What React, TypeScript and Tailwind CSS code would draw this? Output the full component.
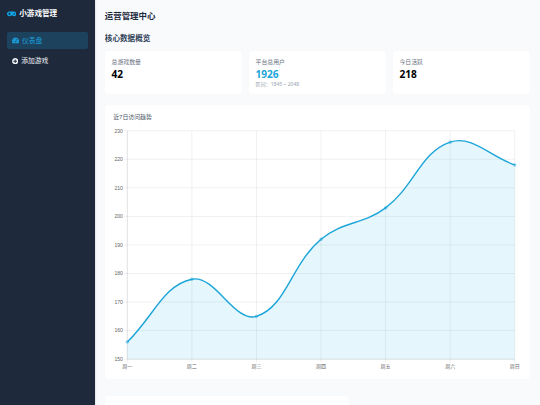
import clsx from "clsx";
import React from "react";
import { FaGamepad, FaPlusCircle, FaTachometerAlt } from "react-icons/fa";

const visits = [
  { day: "周一", value: 156 },
  { day: "周二", value: 178 },
  { day: "周三", value: 165 },
  { day: "周四", value: 192 },
  { day: "周五", value: 203 },
  { day: "周六", value: 226 },
  { day: "周日", value: 218 },
];

const ticks = [150, 160, 170, 180, 190, 200, 210, 220, 230];

const area = { left: 14.3, right: 401.8, top: 4.7, bottom: 233.2 };
const TENSION = 0.4;

type Point = { x: number; y: number };

function toX(index: number) {
  return area.left + (index * (area.right - area.left)) / (visits.length - 1);
}

function toY(value: number) {
  return area.bottom - ((value - 150) / 80) * (area.bottom - area.top);
}

function controlPoints(prev: Point, cur: Point, next: Point) {
  const d01 = Math.hypot(cur.x - prev.x, cur.y - prev.y);
  const d12 = Math.hypot(next.x - cur.x, next.y - cur.y);
  const fa = (TENSION * d01) / (d01 + d12 || 1);
  const fb = (TENSION * d12) / (d01 + d12 || 1);
  return {
    before: {
      x: cur.x - fa * (next.x - prev.x),
      y: cur.y - fa * (next.y - prev.y),
    },
    after: {
      x: cur.x + fb * (next.x - prev.x),
      y: cur.y + fb * (next.y - prev.y),
    },
  };
}

function smoothPath(points: Point[]) {
  const controls = points.map((point, i) =>
    controlPoints(points[i - 1] ?? point, point, points[i + 1] ?? point)
  );
  return points
    .map((p, i) => {
      if (i === 0) return `M${p.x} ${p.y}`;
      const a = controls[i - 1].after;
      const b = controls[i].before;
      return `C${a.x} ${a.y} ${b.x} ${b.y} ${p.x} ${p.y}`;
    })
    .join(" ");
}

const VisitChart: React.FC = () => {
  const points = visits.map(({ value }, i) => ({ x: toX(i), y: toY(value) }));
  const line = smoothPath(points);

  return (
    <svg
      width="410"
      height="246"
      viewBox="0 0 410 246"
      className="block shrink-0 overflow-visible font-['Liberation_Sans','Noto_Sans_CJK_SC',sans-serif] text-[5.06px]"
    >
      <g stroke="#000" strokeOpacity="0.1" strokeWidth="0.6">
        {ticks.map((tick) => (
          <line
            key={tick}
            x1={area.left - 3.4}
            x2={area.right}
            y1={toY(tick)}
            y2={toY(tick)}
          />
        ))}
        {visits.map(({ day }, i) => (
          <line
            key={day}
            x1={toX(i)}
            x2={toX(i)}
            y1={area.top}
            y2={area.bottom + 3.4}
          />
        ))}
        <line
          x1={area.left}
          x2={area.left}
          y1={area.top}
          y2={area.bottom}
        />
        <line
          x1={area.left}
          x2={area.right}
          y1={area.bottom}
          y2={area.bottom}
        />
      </g>
      <path
        d={`${line} L${area.right} ${area.bottom} L${area.left} ${area.bottom} Z`}
        fill="#0ea5e9"
        fillOpacity="0.1"
      />
      <path d={line} fill="none" stroke="#1ba5d8" strokeWidth="1.4" />
      {points.map((p, i) => (
        <circle
          key={i}
          cx={p.x}
          cy={p.y}
          r="1.27"
          fill="#0ea5e9"
          fillOpacity="0.1"
          stroke="#1ba5d8"
          strokeWidth="0.5"
        />
      ))}
      <g fill="#666">
        {ticks.map((tick) => (
          <text key={tick} x="9.8" y={toY(tick) + 1.8} textAnchor="end">
            {tick}
          </text>
        ))}
        {visits.map(({ day }, i) => (
          <text key={day} x={toX(i)} y="242" textAnchor="middle">
            {day}
          </text>
        ))}
      </g>
    </svg>
  );
};

const NavItem: React.FC<{
  icon: React.ReactNode;
  label: string;
  active?: boolean;
}> = ({ icon, label, active }) => (
  <a
    className={clsx(
      "flex h-[17px] items-center gap-[3px] rounded-[1.7px] pl-[5px] text-[6.75px]",
      active ? "bg-[#1c425e] text-[#1b9fdc]" : "text-slate-100"
    )}
  >
    {icon}
    <span className="pt-px">{label}</span>
  </a>
);

const StatCard: React.FC<{
  label: string;
  value: number;
  note?: string;
  highlight?: boolean;
}> = ({ label, value, note, highlight }) => (
  <div className="h-[43.3px] flex-1 rounded-[3.4px] bg-white px-[6.75px] pt-[6.75px] shadow-[0_0_1.5px_rgba(0,0,0,0.03)]">
    <p className="text-[5.9px] leading-[8.4px] text-gray-500">{label}</p>
    <p
      className={clsx(
        "mt-[2.2px] text-[10.13px] font-bold leading-[13.5px]",
        highlight ? "text-[#1ba5d8]" : "text-black"
      )}
    >
      {value}
    </p>
    {note && (
      <p className="-mt-[0.8px] text-[5.06px] leading-[6.75px] text-gray-400">
        {note}
      </p>
    )}
  </div>
);

export default function App() {
  return (
    <div className="flex h-[405px] w-[540px] overflow-hidden bg-slate-50 font-['Noto_Sans','Noto_Sans_CJK_SC',sans-serif]">
      <aside className="w-[94.5px] shrink-0 bg-[#1e293b] px-[6.75px] pt-[8px] text-white shadow-[0_0_2px_rgba(0,0,0,0.2)]">
        <div className="flex h-[11px] items-center gap-[3px] text-[7.6px] font-bold">
          <FaGamepad className="h-[7.6px] w-[9.5px] text-[#0ea5e9]" />
          <span>小游戏管理</span>
        </div>
        <nav className="mt-[13px] flex flex-col gap-[3.4px]">
          <NavItem
            active
            icon={<FaTachometerAlt className="h-[6.75px] w-[7.2px]" />}
            label="仪表盘"
          />
          <NavItem
            icon={<FaPlusCircle className="size-[6.4px]" />}
            label="添加游戏"
          />
        </nav>
      </aside>

      <main className="flex-1 pl-[10.3px] pr-[10.1px] pt-[10.1px]">
        <h1 className="text-[8.44px] font-bold leading-[11.8px] text-slate-800">
          运营管理中心
        </h1>
        <h2 className="mt-[10.8px] text-[7.6px] font-semibold leading-[11.8px] text-slate-700">
          核心数据概览
        </h2>
        <div className="mt-[6.5px] flex gap-[6.75px]">
          <StatCard label="总游戏数量" value={42} />
          <StatCard
            label="平台总用户"
            value={1926}
            note="区间：1845 ~ 2048"
            highlight
          />
          <StatCard label="今日活跃" value={218} />
        </div>

        <section className="mt-[10.8px] h-[274px] rounded-[3.4px] bg-white pl-[8.4px] pt-[8.4px] shadow-[0_0_1.5px_rgba(0,0,0,0.03)]">
          <h3 className="mb-[4.5px] text-[5.9px] leading-[8.4px] text-gray-600">
            近7日访问趋势
          </h3>
          <VisitChart />
        </section>

        <section className="mt-[17.1px] h-[60px] w-[244px] rounded-[3.4px] bg-white shadow-[0_0_1.5px_rgba(0,0,0,0.03)]" />
      </main>
    </div>
  );
}
